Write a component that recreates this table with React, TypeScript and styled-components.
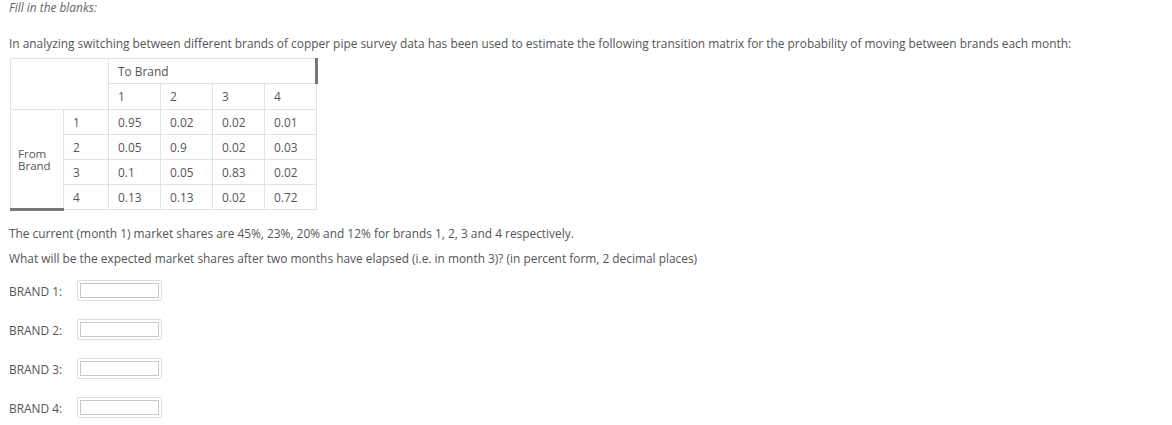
import React from "react";
import styled, { createGlobalStyle } from "styled-components";

const Global = createGlobalStyle`
  html, body { margin: 0; padding: 0; background: #fff; }
  body { font-family: "Open Sans", "Liberation Sans", sans-serif; color: #555; font-size: 11.9px; }
`;

const Page = styled.div`
  padding: 0 0 0 9px;
  display: flex;
  flex-direction: column;
  align-items: flex-start;
`;

const Lead = styled.div`
  font-style: italic;
  color: #666;
  line-height: 14px;
`;

const Para = styled.div<{ $mt: number }>`
  line-height: 14px;
  margin-top: ${(p) => p.$mt}px;
  white-space: nowrap;
`;

const Table = styled.table`
  border-collapse: collapse;
  margin-top: 8px;
  margin-left: 1px;
  table-layout: fixed;
`;

const Cell = styled.td<{ $w?: number; $thickRight?: boolean; $thickBottom?: boolean; $h?: number }>`
  border: 1.5px solid #e2e2e2;
  padding: 0 0 0 9px;
  height: ${(p) => p.$h ?? 24}px;
  width: ${(p) => (p.$w ? `${p.$w - 10}px` : "auto")};
  vertical-align: middle;
  text-align: left;
  line-height: 13px;
  ${(p) => (p.$thickRight ? "border-right: 3px solid #777;" : "")}
  ${(p) => (p.$thickBottom ? "border-bottom: 3px solid #777;" : "")}
`;

const FromCell = styled(Cell)`
  padding-left: 7px;
  padding-top: 1px;
  font-size: 11.5px;
  line-height: 12px;
`;

const Answers = styled.div`
  display: flex;
  flex-direction: column;
  gap: 16px;
  margin-top: 14px;
`;

const AnswerRow = styled.div`
  display: flex;
  align-items: center;
  height: 23px;
`;

const Label = styled.span`
  width: 68px;
  color: #555;
`;

const BoxOuter = styled.div`
  border: 1px solid #dcdcdc;
  border-radius: 2px;
  padding: 2px;
  display: flex;
`;

const BoxInput = styled.input`
  width: 77px;
  height: 13px;
  border: 1px solid #c8c8c8;
  padding: 0;
  margin: 0;
  outline: none;
  background: #fff;
`;

const matrix = [
  ["0.95", "0.02", "0.02", "0.01"],
  ["0.05", "0.9", "0.02", "0.03"],
  ["0.1", "0.05", "0.83", "0.02"],
  ["0.13", "0.13", "0.02", "0.72"],
];

export default function App() {
  return (
    <>
      <Global />
      <Page>
        <Lead>Fill in the blanks:</Lead>
        <Para $mt={22}>
          In analyzing switching between different brands of copper pipe survey data has been used to estimate the following transition matrix for the probability of moving between brands each month:
        </Para>
        <Table>
          <tbody>
            <tr>
              <Cell colSpan={2} rowSpan={2} $w={98}></Cell>
              <Cell colSpan={4} $thickRight>To Brand</Cell>
            </tr>
            <tr>
              {["1", "2", "3", "4"].map((c) => (
                <Cell key={c} $w={52} $h={25}>{c}</Cell>
              ))}
            </tr>
            {matrix.map((row, i) => (
              <tr key={i}>
                {i === 0 && (
                  <FromCell rowSpan={4} $w={54} $thickBottom>
                    From
                    <br />
                    Brand
                  </FromCell>
                )}
                <Cell $w={44}>{i + 1}</Cell>
                {row.map((v, j) => (
                  <Cell key={j} $w={52}>{v}</Cell>
                ))}
              </tr>
            ))}
          </tbody>
        </Table>
        <Para $mt={15}>
          The current (month 1) market shares are 45%, 23%, 20% and 12% for brands 1, 2, 3 and 4 respectively.
        </Para>
        <Para $mt={11}>
          What will be the expected market shares after two months have elapsed (i.e. in month 3)? (in percent form, 2 decimal places)
        </Para>
        <Answers>
          {[1, 2, 3, 4].map((n) => (
            <AnswerRow key={n}>
              <Label>BRAND {n}:</Label>
              <BoxOuter>
                <BoxInput type="text" />
              </BoxOuter>
            </AnswerRow>
          ))}
        </Answers>
      </Page>
    </>
  );
}
